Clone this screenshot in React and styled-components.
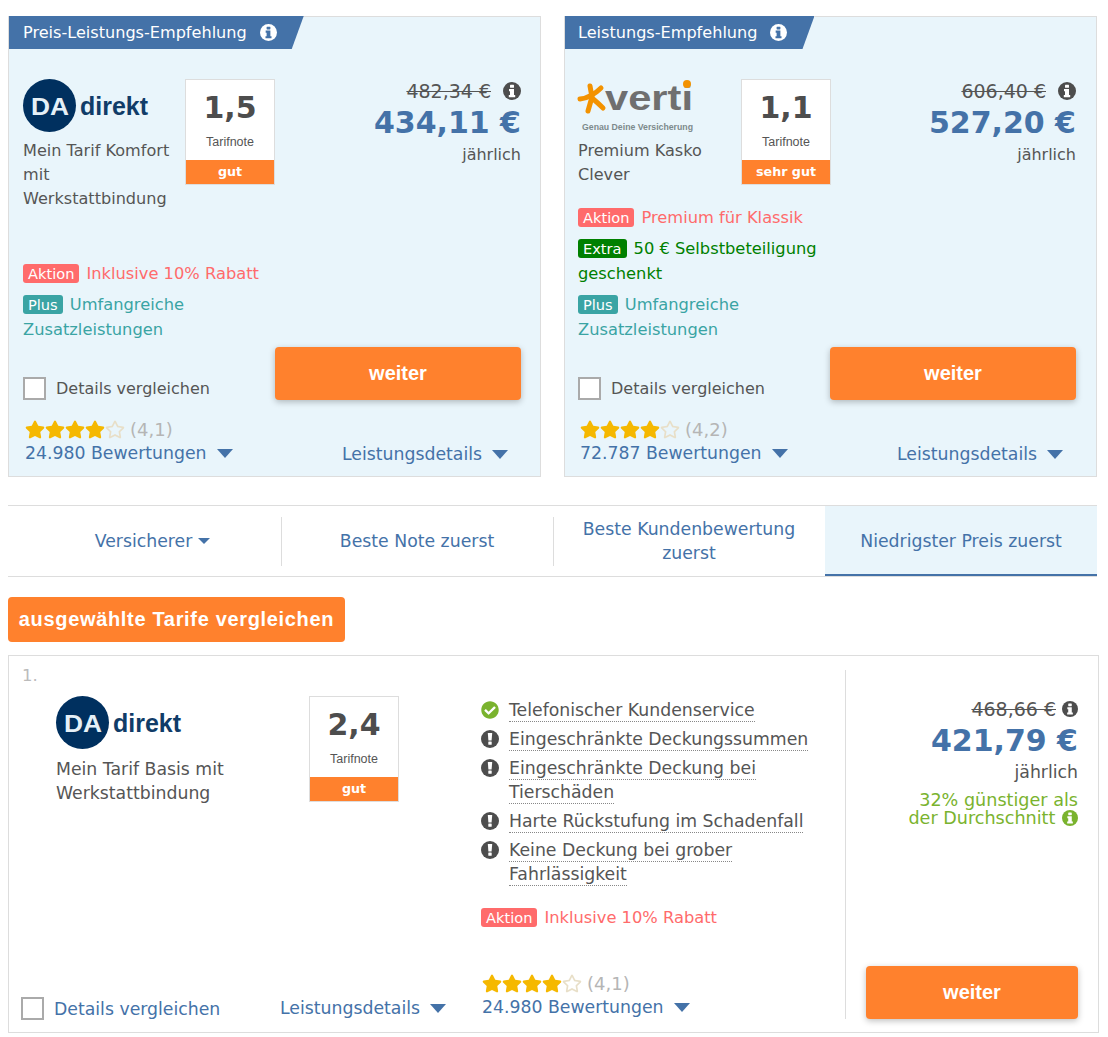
import React from 'react'
import styled, { createGlobalStyle } from 'styled-components'
import { FaCheckCircle, FaStar, FaRegStar } from 'react-icons/fa'

const blue = '#4472a8'
const orange = '#ff812d'
const grey = '#555555'
const large = '17.3px'

const GlobalStyle = createGlobalStyle`
  html, body {
    margin: 0;
    padding: 0;
    background: #ffffff;
    color: ${grey};
    font-family: 'DejaVu Sans', Verdana, sans-serif;
    font-size: 16px;
  }
  * {
    box-sizing: border-box;
  }
`

const Page = styled.div`
  width: 1108px;
  padding: 16px 0 4px 8px;
`

const Recommendations = styled.div`
  display: grid;
  grid-template-columns: 533px 533px;
  gap: 23px;
`

const Card = styled.div`
  height: 461px;
  background: #e9f5fb;
  border: 1px solid #dddddd;
  display: flex;
  flex-direction: column;
`

const Ribbon = styled.div`
  align-self: flex-start;
  height: 33px;
  padding: 0 27px 0 ${p => p.$left}px;
  margin-top: -1px;
  background: ${blue};
  color: #ffffff;
  display: flex;
  align-items: center;
  gap: 13px;
  font-size: 16.1px;
  clip-path: polygon(0 0, 100% 0, calc(100% - 12px) 100%, 0 100%);
`

const CardBody = styled.div`
  flex: 1;
  display: flex;
  flex-direction: column;
  padding: 30px ${p => p.$right}px 10px ${p => p.$left}px;
`

const TopRow = styled.div`
  display: flex;
  justify-content: space-between;
  align-items: flex-start;
`

const Product = styled.div`
  width: ${p => 176 - p.$left}px;
  flex: none;
`

const ProductName = styled.div`
  margin-top: ${p => p.$large ? 8 : 7}px;
  width: 162px;
  font-size: ${p => p.$large ? large : '16.1px'};
  line-height: 24px;
`

const NoteBox = styled.div`
  width: 90px;
  height: 106px;
  flex: none;
  background: #ffffff;
  border: 1px solid #dddddd;
  display: flex;
  flex-direction: column;
  align-items: center;
`

const NoteValue = styled.div`
  margin-top: 10px;
  font-size: 30px;
  font-weight: bold;
  line-height: 36px;
  color: #4d4d4d;
`

const NoteLabel = styled.div`
  margin-top: 8px;
  font-family: 'Liberation Sans', Arial, sans-serif;
  font-size: 12.5px;
  line-height: 16px;
`

const NoteBand = styled.div`
  margin-top: auto;
  width: 100%;
  height: 24px;
  background: ${orange};
  color: #ffffff;
  font-size: 12.7px;
  font-weight: bold;
  line-height: 24px;
  text-align: center;
`

const PriceBlock = styled.div`
  flex: 1;
  display: flex;
  flex-direction: column;
  align-items: flex-end;
`

const OldPrice = styled.div`
  display: flex;
  align-items: center;
  gap: ${p => p.$gap}px;
  font-size: 19px;
  line-height: 24px;
  s {
    text-decoration: line-through;
  }
`

const Price = styled.div`
  margin-top: 2px;
  font-size: 30px;
  font-weight: bold;
  line-height: 36px;
  color: ${blue};
`

const Period = styled.div`
  margin-top: ${p => p.$large ? 1 : 2}px;
  font-size: ${p => p.$large ? large : '16px'};
  line-height: 24px;
`

const Promos = styled.div`
  margin-top: auto;
  width: 245px;
`

const Promo = styled.div`
  line-height: 25px;
  margin-top: 6px;
  font-size: 16.3px;
  color: ${p => p.$color};
`

const Badge = styled.span`
  display: inline-block;
  padding: 0 5px;
  margin-right: 7px;
  border-radius: 3px;
  background: ${p => p.$color};
  color: #ffffff;
  font-size: 14.6px;
  line-height: 19px;
`

const ActionRow = styled.div`
  display: flex;
  justify-content: space-between;
  align-items: flex-end;
  margin-top: 5px;
`

const Compare = styled.label`
  display: flex;
  align-items: center;
  gap: 10px;
  line-height: 22px;
  font-size: ${p => p.$link ? large : '16px'};
  color: ${p => p.$link ? blue : grey};
`

const CheckBox = styled.span`
  display: block;
  width: 23px;
  height: 23px;
  background: #ffffff;
  border: 2px solid #aaaaaa;
`

const Button = styled.button`
  width: ${p => p.$width}px;
  height: 53px;
  border: 0;
  border-radius: 4px;
  background: ${orange};
  color: #ffffff;
  font-family: 'Liberation Sans', Arial, sans-serif;
  font-size: 20px;
  font-weight: bold;
  box-shadow: 0 2px 6px rgba(0, 0, 0, 0.25);
`

const InfoRow = styled.div`
  display: flex;
  justify-content: space-between;
  align-items: flex-end;
  padding: 18px 13px 0 2px;
`

const Rating = styled.div`
  line-height: 24px;
`

const Stars = styled.div`
  display: flex;
  align-items: center;
  height: 23px;
  color: #f5b800;
  svg {
    width: 20px;
    height: 19px;
  }
  span {
    margin-left: 5px;
    font-size: 18px;
    color: #b5b5b5;
  }
`

const LinkText = styled.a`
  display: inline-flex;
  align-items: center;
  gap: 10px;
  color: ${blue};
  font-size: ${large};
  line-height: 24px;
`

const Triangle = styled.i`
  display: block;
  width: 0;
  height: 0;
  border-style: solid;
  border-color: ${blue} transparent transparent;
  border-width: ${p => p.$small ? '6px 6px 0' : '9px 8.5px 0'};
`

const SortBar = styled.div`
  margin-top: 28px;
  width: 1089px;
  height: 72px;
  border-top: 1px solid #dddddd;
  border-bottom: 1px solid #dddddd;
  display: grid;
  grid-template-columns: 273px 272px 272px 272px;
`

const SortTab = styled.div`
  position: relative;
  display: flex;
  align-items: center;
  justify-content: center;
  gap: 6px;
  text-align: center;
  font-size: ${large};
  line-height: 24px;
  color: ${blue};
  padding: 0 ${p => p.$first ? '0' : '24px'} 0 ${p => p.$first ? '16px' : '24px'};
  background: ${p => p.$active ? '#e9f5fb' : 'transparent'};
  box-shadow: ${p => p.$active ? `inset 0 -2px 0 ${blue}` : 'none'};

  &::before {
    content: '';
    display: ${p => p.$divided ? 'block' : 'none'};
    position: absolute;
    left: 0;
    top: 11px;
    bottom: 10px;
    width: 1px;
    background: #dddddd;
  }
`

const CompareButton = styled.button`
  display: block;
  margin-top: 20px;
  width: 337px;
  height: 45px;
  border: 0;
  border-radius: 4px;
  background: ${orange};
  color: #ffffff;
  font-family: 'Liberation Sans', Arial, sans-serif;
  font-size: 20px;
  font-weight: bold;
  letter-spacing: 0.67px;
  white-space: nowrap;
  padding: 0;
`

const ListCard = styled.div`
  margin-top: 13px;
  width: 1091px;
  height: 378px;
  border: 1px solid #dddddd;
  padding: 14px 20px 13px 0;
  display: flex;
`

const ListMain = styled.div`
  flex: 1;
  display: flex;
  flex-direction: column;
`

const Rank = styled.div`
  padding-left: 13px;
  font-size: 16.5px;
  line-height: 12px;
  color: #bbbbbb;
`

const ListTop = styled.div`
  margin-top: 14px;
  display: grid;
  grid-template-columns: 253px 172px 1fr;
  padding-left: 47px;
`

const ListProduct = styled.div`
  width: 200px;
`

const ListProductName = styled(ProductName)`
  width: 200px;
`

const Features = styled.ul`
  list-style: none;
  margin: 0;
  padding: 2px 0 0;
  width: 335px;
`

const Feature = styled.li`
  display: flex;
  gap: 10px;
  font-size: ${large};
  line-height: 24px;
  margin-bottom: 5px;
  svg {
    flex: none;
    width: 18px;
    height: 18px;
    margin-top: 3px;
    color: ${p => p.$ok ? '#7ab32e' : '#4d4d4d'};
  }
  span span {
    border-bottom: 1px dotted #888888;
    padding-bottom: 1px;
  }
`

const ListPromo = styled.div`
  margin-top: 19px;
  font-size: 16.3px;
  line-height: 25px;
  color: #ff6b6b;
`

const ListBottom = styled.div`
  margin: auto 0 -1px;
  display: grid;
  grid-template-columns: 259px 202px 1fr;
  align-items: end;
  padding-left: 12px;
`

const ListSide = styled.div`
  width: 233px;
  border-left: 1px solid #dddddd;
  display: flex;
  flex-direction: column;
  align-items: flex-end;
  padding-top: 27px;
`

const Saving = styled.div`
  margin-top: 7px;
  text-align: right;
  font-size: 17.6px;
  line-height: 18px;
  color: #7ab32e;
  svg {
    vertical-align: -2px;
    margin-left: 1px;
  }
`

const SideButton = styled.div`
  margin-top: auto;
`

const InfoIcon = ({ size, color = 'currentColor', mark = 'white' }) => (
  <svg width={size} height={size} viewBox='0 0 18 18' style={{ flex: 'none' }}>
    <circle cx='9' cy='9' r='9' fill={color} />
    <rect x='7' y='2.8' width='4' height='3' rx='0.5' fill={mark} />
    <path d='M6 7h5v6h1.2v2.2H5.8V13H7V9.2H6z' fill={mark} />
  </svg>
)

const WarnIcon = () => (
  <svg viewBox='0 0 18 18'>
    <circle cx='9' cy='9' r='9' fill='currentColor' />
    <path d='M6.8 3h4.4l-.6 7.6H7.4z' fill='white' />
    <rect x='7.3' y='11.6' width='3.4' height='3.2' rx='0.5' fill='white' />
  </svg>
)

const LogoSvg = styled.svg`
  display: block;
  overflow: visible;
`

const DaLogo = () => (
  <LogoSvg width='132' height='53' viewBox='0 0 132 53'>
    <circle cx='26.5' cy='26.5' r='26.5' fill='#00305f' />
    <text x='8' y='36' fontFamily='Liberation Sans' fontWeight='bold' fontSize='23' fill='#e6f0f7' textLength='38' lengthAdjust='spacingAndGlyphs'>DA</text>
    <text x='57' y='36' fontFamily='Liberation Sans' fontSize='26' fontWeight='bold' fill='#103c68' textLength='68' lengthAdjust='spacingAndGlyphs'>direkt</text>
  </LogoSvg>
)

const VertiLogo = () => (
  <LogoSvg width='124' height='53' viewBox='0 0 124 53'>
    <g stroke='#f39200' strokeWidth='5' strokeLinecap='round' fill='none'>
      <path d='M2 20 Q13 19 23 9' />
      <path d='M12 7 L14 18 L10 32' />
      <path d='M14 19 Q20 24 25 29' />
    </g>
    <text x='27' y='31' fontFamily='Liberation Sans' fontWeight='bold' fontSize='35' fill='#6f6f6f' textLength='88' lengthAdjust='spacingAndGlyphs'>verti</text>
    <circle cx='109' cy='5' r='4' fill='#f39200' />
    <text x='4' y='51' fontFamily='Liberation Sans' fontWeight='bold' fontSize='9.5' fill='#7d8a8c' textLength='111' lengthAdjust='spacingAndGlyphs'>Genau Deine Versicherung</text>
  </LogoSvg>
)

const StarRating = ({ value }) => (
  <Stars>
    <FaStar /><FaStar /><FaStar /><FaStar />
    <FaRegStar color='#e8dfc8' />
    <span>({value})</span>
  </Stars>
)

const Note = ({ value, label }) => (
  <NoteBox>
    <NoteValue>{value}</NoteValue>
    <NoteLabel>Tarifnote</NoteLabel>
    <NoteBand>{label}</NoteBand>
  </NoteBox>
)

const coral = '#ff6b6b'
const teal = '#3aa4a4'
const green = '#008000'

const cards = [
  {
    ribbon: 'Preis-Leistungs-Empfehlung',
    logo: <DaLogo />,
    name: 'Mein Tarif Komfort mit Werkstattbindung',
    note: '1,5',
    noteLabel: 'gut',
    oldPrice: '482,34 €',
    price: '434,11 €',
    promos: [
      { tag: 'Aktion', text: 'Inklusive 10% Rabatt', color: coral },
      { tag: 'Plus', text: 'Umfangreiche Zusatzleistungen', color: teal }
    ],
    rating: '4,1',
    reviews: '24.980 Bewertungen',
    left: 14,
    right: 19
  },
  {
    ribbon: 'Leistungs-Empfehlung',
    logo: <VertiLogo />,
    name: 'Premium Kasko Clever',
    note: '1,1',
    noteLabel: 'sehr gut',
    oldPrice: '606,40 €',
    price: '527,20 €',
    promos: [
      { tag: 'Aktion', text: 'Premium für Klassik', color: coral },
      { tag: 'Extra', text: '50 € Selbstbeteiligung geschenkt', color: green },
      { tag: 'Plus', text: 'Umfangreiche Zusatzleistungen', color: teal }
    ],
    rating: '4,2',
    reviews: '72.787 Bewertungen',
    left: 13,
    right: 20
  }
]

const features = [
  { ok: true, text: 'Telefonischer Kundenservice' },
  { text: 'Eingeschränkte Deckungssummen' },
  { text: 'Eingeschränkte Deckung bei Tierschäden' },
  { text: 'Harte Rückstufung im Schadenfall' },
  { text: 'Keine Deckung bei grober Fahrlässigkeit' }
]

const App = () => (
  <Page>
    <GlobalStyle />
    <Recommendations>
      {cards.map(card => (
        <Card key={card.ribbon}>
          <Ribbon $left={card.left}>{card.ribbon} <InfoIcon size={17} color='white' mark={blue} /></Ribbon>
          <CardBody $left={card.left} $right={card.right}>
            <TopRow>
              <Product $left={card.left}>
                {card.logo}
                <ProductName>{card.name}</ProductName>
              </Product>
              <Note value={card.note} label={card.noteLabel} />
              <PriceBlock>
                <OldPrice $gap={12}><s>{card.oldPrice}</s> <InfoIcon size={18} color='#4d4d4d' /></OldPrice>
                <Price>{card.price}</Price>
                <Period>jährlich</Period>
              </PriceBlock>
            </TopRow>
            <Promos>
              {card.promos.map(promo => (
                <Promo key={promo.tag} $color={promo.color}>
                  <Badge $color={promo.color}>{promo.tag}</Badge>{promo.text}
                </Promo>
              ))}
            </Promos>
            <ActionRow>
              <Compare><CheckBox /> Details vergleichen</Compare>
              <Button $width={246}>weiter</Button>
            </ActionRow>
            <InfoRow>
              <Rating>
                <StarRating value={card.rating} />
                <LinkText>{card.reviews} <Triangle /></LinkText>
              </Rating>
              <LinkText>Leistungsdetails <Triangle /></LinkText>
            </InfoRow>
          </CardBody>
        </Card>
      ))}
    </Recommendations>

    <SortBar>
      <SortTab $first>Versicherer <Triangle $small /></SortTab>
      <SortTab $divided>Beste Note zuerst</SortTab>
      <SortTab $divided>Beste Kundenbewertung zuerst</SortTab>
      <SortTab $active>Niedrigster Preis zuerst</SortTab>
    </SortBar>

    <CompareButton>ausgewählte Tarife vergleichen</CompareButton>

    <ListCard>
      <ListMain>
        <Rank>1.</Rank>
        <ListTop>
          <ListProduct>
            <DaLogo />
            <ListProductName $large>Mein Tarif Basis mit Werkstattbindung</ListProductName>
          </ListProduct>
          <Note value='2,4' label='gut' />
          <div>
            <Features>
              {features.map(f => (
                <Feature key={f.text} $ok={f.ok}>
                  {f.ok ? <FaCheckCircle /> : <WarnIcon />}
                  <span><span>{f.text}</span></span>
                </Feature>
              ))}
            </Features>
            <ListPromo><Badge $color={coral}>Aktion</Badge>Inklusive 10% Rabatt</ListPromo>
          </div>
        </ListTop>
        <ListBottom>
          <Compare $link><CheckBox /> Details vergleichen</Compare>
          <div><LinkText>Leistungsdetails <Triangle /></LinkText></div>
          <Rating>
            <StarRating value='4,1' />
            <LinkText>24.980 Bewertungen <Triangle /></LinkText>
          </Rating>
        </ListBottom>
      </ListMain>
      <ListSide>
        <OldPrice $gap={6}><s>468,66 €</s> <InfoIcon size={16} color='#4d4d4d' /></OldPrice>
        <Price>421,79 €</Price>
        <Period $large>jährlich</Period>
        <Saving>32% günstiger als<br />der Durchschnitt <InfoIcon size={16} color='#7ab32e' /></Saving>
        <SideButton><Button $width={212}>weiter</Button></SideButton>
      </ListSide>
    </ListCard>
  </Page>
)

export default App
